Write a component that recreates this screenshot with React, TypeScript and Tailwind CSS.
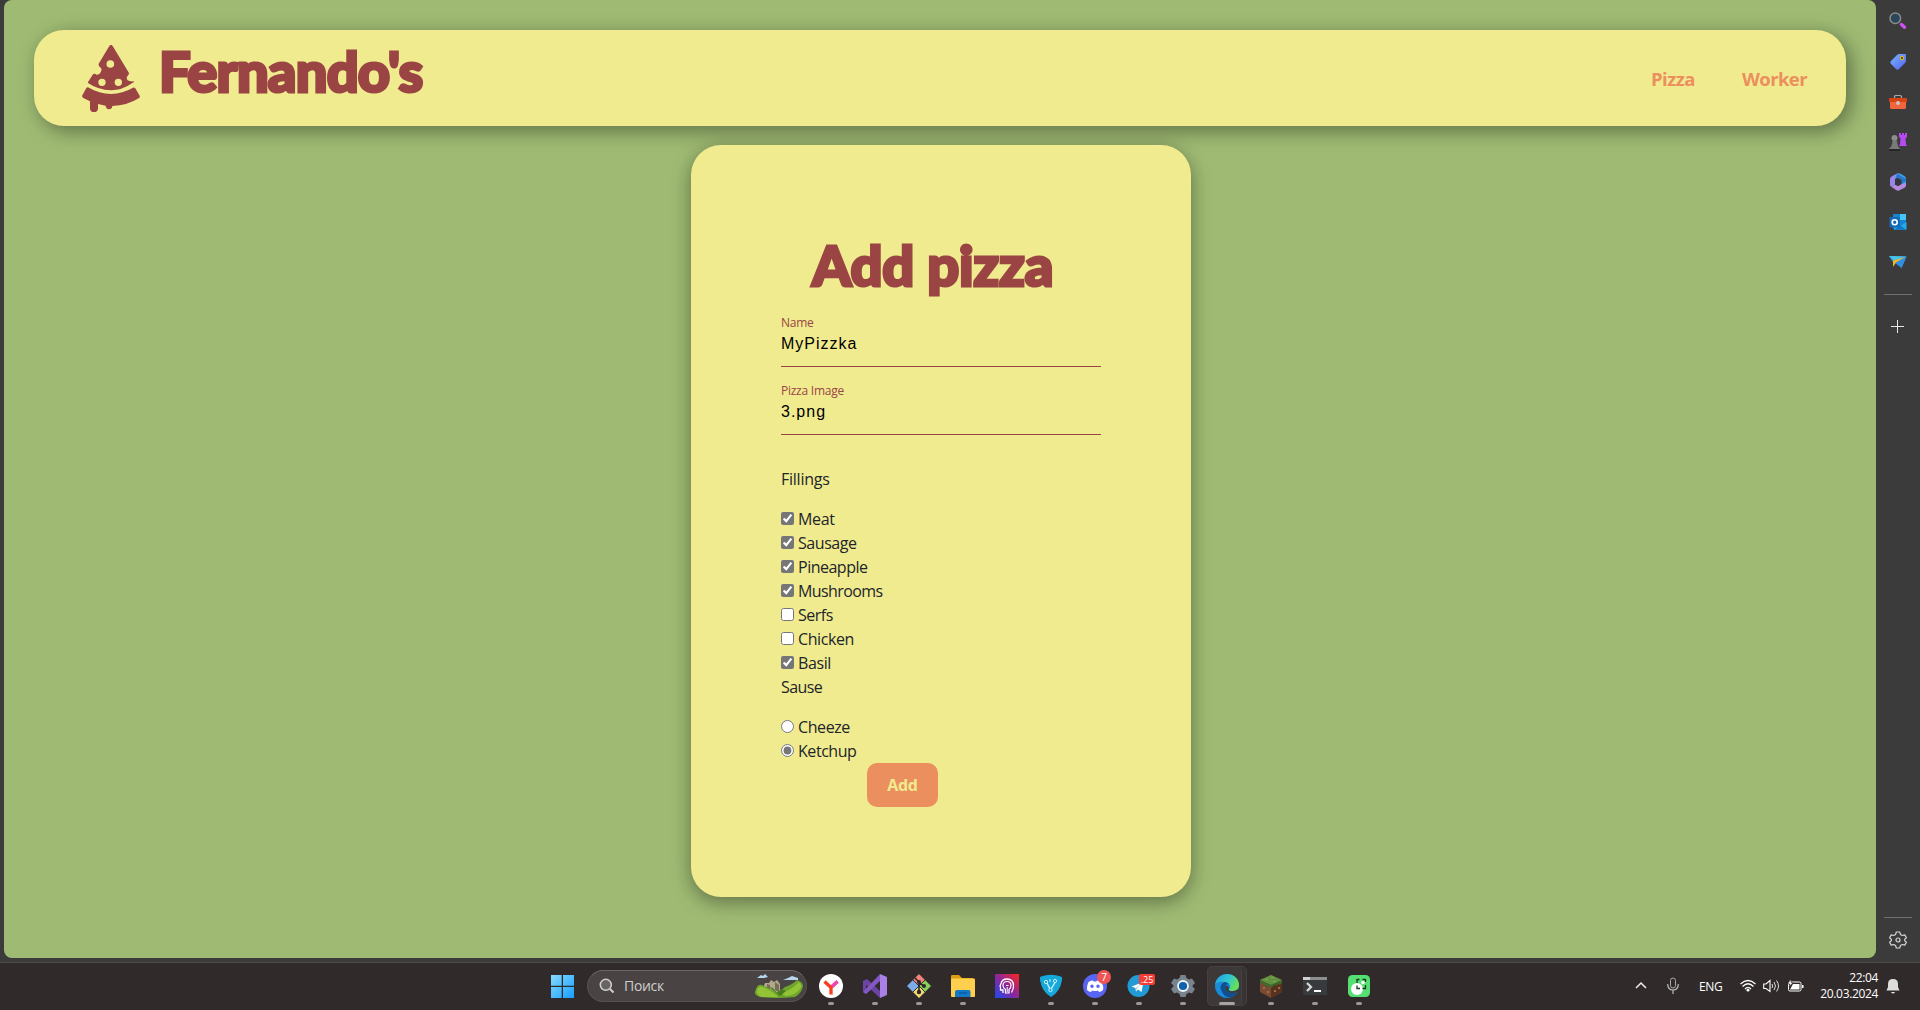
import React from "react";

const title = "font-['Lato'] font-black text-[#9b4444] whitespace-nowrap leading-none";
const ui = "font-['Open_Sans',sans-serif]";

function PizzaLogo() {
  return (
    <svg className="h-[67px] w-[58px]" viewBox="246 135 174 201" fill="#9b4444">
      <path
        fillRule="evenodd"
        d="M328 138Q333 131 338 138L387 219Q387 225 382 229Q378 234 383 241Q388 245 402 244Q403 247 396 250Q366 271 333 271Q295 270 264 249Q263 246 266 243L278 224Q282 219 290 224Q299 225 302 217Q307 207 302 203Q294 198 296 191ZM331 180.500A11.500 11.500 0 1 0 331 203.500A11.500 11.500 0 1 0 331 180.500ZM306 236A11 11 0 1 0 306 258A11 11 0 1 0 306 236ZM355 236A11 11 0 1 0 355 258A11 11 0 1 0 355 236Z"
      />
      <path d="M259 264Q262 260 267 263Q297 281 333 282Q368 281 399 263Q403 261 406 265L419 287Q421 292 416 295Q381 317 337 318Q336 328 327 328Q318 327 317 317L294 312V326Q293 336 282 336Q271 336 270 326V304L250 294Q245 291 247 286Z" />
    </svg>
  );
}

function Field({ label, value }: { label: string; value: string }) {
  return (
    <div className="mb-[15px] h-[53px] w-80 border-b border-[#9b4444] pt-px">
      <div className={`${ui} h-4 text-[12px] leading-4 tracking-[-0.25px] text-[#9b4444]`}>{label}</div>
      <div className="font-['Liberation_Sans',sans-serif] pt-[3px] text-[16px] leading-5 tracking-[1px] text-black">{value}</div>
    </div>
  );
}

function Option({ type, label, on, track }: { type: "checkbox" | "radio"; label: string; on: boolean; track: string }) {
  return (
    <label className="flex h-6 items-start">
      <input type={type} checked={on} readOnly className="mt-[5px] mr-1 size-[13px] accent-[#767676]" />
      <span className={`leading-6 ${track}`}>{label}</span>
    </label>
  );
}

const S = ({ children, box = "0 0 24 24", cls = "size-6" }: { children: React.ReactNode; box?: string; cls?: string }) => (
  <svg viewBox={box} className={`${cls} shrink-0`} fill="none">
    {children}
  </svg>
);

function Sidebar() {
  const cell = "flex h-10 items-center justify-center";
  return (
    <aside className="flex w-11 flex-col bg-[#3b3b3b] pt-[1px]">
      <div className={cell}>
        <S box="0 0 18 18" cls="size-[18px]">
          <path d="M12.500 12.500L15.500 15.200" stroke="#d050f5" strokeWidth="3.400" strokeLinecap="round" />
          <circle cx="6.300" cy="6.300" r="5.300" fill="#29465a" stroke="#8b8b8b" strokeWidth="1.500" />
        </S>
      </div>
      <div className={`${cell} h-[41px]`}>
        <S box="0 0 18 18" cls="size-[18px]">
          <defs><linearGradient id="tag" x1="0" y1="0" x2="1" y2="1"><stop stopColor="#78b8ff" /><stop offset="1" stopColor="#5560f2" /></linearGradient></defs>
          <path d="M10 1H16Q17 1 17 2V8Q17 9 16 10L10 16Q8.500 17.500 7 16L2 11Q.5 9.500 2 8L8 2Q9 1 10 1Z" fill="url(#tag)" />
          <circle cx="13" cy="5" r="1.700" fill="#354276" stroke="#d9b51b" strokeWidth="1.200" />
        </S>
      </div>
      <div className={cell}>
        <S box="0 0 18 18" cls="size-[18px]">
          <path d="M5.500 5V3.500Q5.500 2.500 7 2.500H11Q12.500 2.500 12.500 3.500V5" stroke="#a9a9a9" strokeWidth="1.200" />
          <rect x="1" y="6" width="16" height="10" rx="1.500" fill="#f1653e" />
          <path d="M1 5H17Q18 5 18 6V9H0V6Q0 5 1 5Z" fill="#d84316" />
          <circle cx="9" cy="10" r="1.900" fill="#c9c9c9" />
        </S>
      </div>
      <div className={cell}>
        <S box="0 0 18 18" cls="size-[18px]">
          <path d="M10 0H12V2H13V0H15V2H16V0H18V4L16.500 5.500L17 11L18 13H10L11 11L11.500 5.500L10 4Z" fill="#b54af2" />
          <circle cx="5.500" cy="5" r="3" fill="#8c8c8c" />
          <path d="M3 8H8.500L8 9.500L9.500 14L11 15.500V17.500H0V15.500L2 14L3.500 9.500Z" fill="#7a7a7a" />
          <path d="M0 16H11V18H0Z" fill="#262626" />
        </S>
      </div>
      <div className={cell}>
        <S box="0 0 18 18" cls="size-[18px]">
          <path d="M8 .5L2.500 3.500Q1 4.500 1 6V12Q1 13 2 13.500L6 11.500V6L9 4Z" fill="#9a86e9" />
          <path d="M8 .5Q10-.3 12 1L16 3.500Q17 4.500 17 6V12L12.500 14V7.500L6 4.500Z" fill="#3ba5ea" />
          <path d="M17 10V12.500Q17 14 15 15L10 17.500Q8.500 18 7 17L2 13.500L6 11.500L9 13L12.500 11Z" fill="#b58add" />
          <path d="M12.500 7V11L17 8V6L8 .5L7 5Z" fill="#2977ca" />
          <path d="M9 5L12.500 7V11L9 13L6 11.500V6Z" fill="#35373c" />
        </S>
      </div>
      <div className={cell}>
        <S box="0 0 18 18" cls="size-[18px]">
          <rect x="4" y="1" width="13" height="15" rx="1" fill="#1685d1" />
          <path d="M11 1H17V7H11Z" fill="#43c7f4" />
          <path d="M5 10L11 13L17.500 9V16Q17.500 17 16.500 17H5Z" fill="#27a9e7" />
          <path d="M11 12L17 17H5Z" fill="#117ac4" />
          <rect x=".5" y="4" width="10.500" height="10.500" rx="1" fill="#1469b9" />
          <circle cx="5.700" cy="9.200" r="2.500" stroke="white" strokeWidth="1.600" />
        </S>
      </div>
      <div className={`${cell} h-[39px]`}>
        <S box="0 0 18 18" cls="size-[18px]">
          <path d="M0 3L17.500 3.500L12.500 15L7.500 11L3 8Z" fill="#2b91df" />
          <path d="M0 3L17.500 3.500L5 7.500Z" fill="#47c5e8" />
          <path d="M4 7.500L17 4L7 9.500L4 14Z" fill="#f6b525" />
          <path d="M7 9.500L17.500 3.500L12.500 15Z" fill="#2f8fe5" />
        </S>
      </div>
      <div className="mx-2 mt-[13px] h-px bg-[#707070]" />
      <div className="mt-[25px] flex justify-center pr-px">
        <S box="0 0 13 13" cls="size-[13px]"><path d="M6.500 0V13M0 6.500H13" stroke="#e6e6e6" /></S>
      </div>
      <div className="flex-1" />
      <div className="mx-2 h-px bg-[#707070]" />
      <div className="mt-[13px] mb-[13px] flex justify-center">
        <S box="0 0 18 18" cls="size-[18px]">
          <path d="M7.300 1H10.700L11.400 3.400L13.300 4.500L15.800 3.900L17.400 6.700L15.600 8.400V9.600L17.400 11.300L15.800 14.100L13.300 13.500L11.400 14.600L10.700 17H7.300L6.600 14.600L4.700 13.500L2.200 14.100L.6 11.300L2.400 9.600V8.400L.6 6.700L2.200 3.900L4.700 4.500L6.600 3.400Z" stroke="#d5d5d5" strokeWidth="1.200" strokeLinejoin="round" />
          <circle cx="9" cy="9" r="2" stroke="#d5d5d5" strokeWidth="1.200" />
        </S>
      </div>
    </aside>
  );
}

function Tile({ children, run = true, active = false }: { children: React.ReactNode; run?: boolean; active?: boolean }) {
  return (
    <div className="relative h-10 w-11 shrink-0">
      {active && <span className="absolute top-0 left-[2px] h-10 w-10 rounded-[5px] border border-[#454040] bg-[#393434]" />}
      {active && <span className="absolute top-0 left-0.5 h-10 w-[35px] rounded-[5px] border border-[#464141] bg-[#3e3939]" />}
      <div className="absolute top-2 left-2.5 size-6">{children}</div>
      {run && <span className={active ? "absolute top-9 left-3.5 h-[3px] w-4 rounded-full bg-[#a6a3a3]" : "absolute top-9 left-[19px] h-[3px] w-1.5 rounded-full bg-[#9b9898]"} />}
    </div>
  );
}

function AppIcons() {
  return (
    <>
      <Tile><S>
        <circle cx="12" cy="12" r="12" fill="white" />
        <path d="M5.500 7.500L12 13.500L18.500 7.500M12 13V20.500" stroke="#fa3c21" strokeWidth="3.300" />
        <path d="M13 12.500L18.500 7.500" stroke="#f145bb" strokeWidth="3.300" />
      </S></Tile>
      <Tile><S>
        <path d="M0 7L4 5L17 17V24L3 11V15L7 11.500L10 14L3 20L0 18Z" fill="#6b44a5" />
        <path d="M3 20L0 18L17 0V7Z" fill="#8358c4" />
        <path d="M17 0L24 3V21L17 24Z" fill="#a981e6" />
      </S></Tile>
      <Tile><S>
        <path d="M12 0L18 6L12 12L6 6Z" fill="#f4817b" />
        <path d="M6 6L12 12L6 18L0 12Z" fill="#7daceb" />
        <path d="M18 6L24 12L18 18L12 12Z" fill="#8bcf58" />
        <path d="M12 12L18 18L12 24L6 18Z" fill="#f5d777" />
        <path d="M6 6L18 18M18 6L6 18" stroke="#352d2d" />
        <path d="M8 4L12 8V18M12 9L17 12" stroke="#2b2929" strokeWidth="1.600" />
        <circle cx="12" cy="8" r="2" fill="#2b2929" /><circle cx="12" cy="18" r="2.200" fill="#2b2929" /><circle cx="17" cy="12" r="2" fill="#2b2929" />
      </S></Tile>
      <Tile><S>
        <path d="M0 2Q0 1 1 1H8L11 4H22V10H0Z" fill="#dc9d10" />
        <rect y="4.500" width="24" height="18.500" rx="1" fill="#ffd04d" />
        <path d="M4 23V18Q4 16 6 16H18Q19.500 16 19.500 18V23Z" fill="#1479c4" /><path d="M8 19H16" stroke="#075ca6" strokeWidth="1.500" />
      </S></Tile>
      <Tile run={false}><S>
        <defs><linearGradient id="rb" x1="0" y1="1" x2="1" y2="0"><stop stopColor="#194bf2" /><stop offset=".5" stopColor="#8e269a" /><stop offset="1" stopColor="#ff231e" /></linearGradient></defs>
        <path d="M0 0H24V24H0Z" fill="url(#rb)" />
        <path d="M8 19V16H5.500V13L5 12L6 9.500Q7 5 12 5Q18.500 5 18.500 12Q18.500 15 16.500 18.500" stroke="white" strokeWidth="1.300" />
        <path d="M10.500 19V15.500Q8 14 8 11.500Q8 7.500 12 7.500Q16 7.500 16 11.500Q16 14 14 15.500V19Z" stroke="white" strokeWidth="1.200" />
        <path d="M12.200 18V13M11 11.500H13.500" stroke="white" />
      </S></Tile>
      <Tile><S>
        <path d="M2 2.500Q12-1 22 2.500Q23.500 3 23 6Q21 18 12 23Q3 18 1 6Q.5 3 2 2.500Z" fill="#16a8da" />
        <path d="M8 9L11.500 16L16 8.500" stroke="#c8f3ff" strokeWidth="1.400" />
        <circle cx="7" cy="8" r="1.700" fill="#16a8da" stroke="#c8f3ff" /><circle cx="11.500" cy="16" r="1.700" fill="#16a8da" stroke="#c8f3ff" /><circle cx="16" cy="7" r="1.600" fill="#16a8da" stroke="#c8f3ff" /><path d="M11 5V8" stroke="#c8f3ff" />
      </S></Tile>
      <Tile>
        <S>
          <circle cx="12" cy="12" r="12" fill="#5865f2" />
          <path fillRule="evenodd" d="M5.500 8Q8 6 10 6.500L10.500 7.500H13.500L14 6.500Q16 6 18.500 8Q21 13 20 16Q18 18 16 18L15 16.500Q12 17.500 9 16.500L8 18Q6 18 4 16Q3.500 12 5.500 8ZM9 10.500A1.700 1.700 0 1 0 9 14A1.700 1.700 0 1 0 9 10.500ZM15 10.500A1.700 1.700 0 1 0 15 14A1.700 1.700 0 1 0 15 10.500Z" fill="white" />
        </S>
        <span className={`${ui} absolute -top-1 left-[14px] flex size-3.5 items-center justify-center rounded-full bg-[#f05555] text-[10px] leading-none text-white`}>7</span>
      </Tile>
      <Tile>
        <S><circle cx="11.500" cy="12" r="11" fill="#229bd5" /><path d="M4.500 12.500L16.500 8L14.500 18L11 15.500L9 17.500L8.500 14Z" fill="white" /><path d="M8.500 14L14 10L10 14.500L9 17.500Z" fill="#a9d5ec" /></S>
        <span className={`${ui} absolute top-0 left-3 flex h-[11px] w-4 items-center justify-center rounded-[2px] bg-[#f53d35] text-[9px] leading-none text-white`}>.25</span>
      </Tile>
      <Tile><S>
        <path d="M9.500 1H14.500L15.500 4L18 5.500L21 4.500L24 9L21.500 11.500V12.500L24 15L21 19.500L18 18.500L15.500 20L14.500 23H9.500L8.500 20L6 18.500L3 19.500L0 15L2.500 12.500V11.500L0 9L3 4.500L6 5.500L8.500 4Z" fill="#78848d" />
        <circle cx="12" cy="12" r="5" fill="#1261ad" stroke="#eef4f8" strokeWidth="1.800" />
      </S></Tile>
      <Tile active><S>
        <defs>
          <linearGradient id="edge" x1="0" y1="0" x2="1" y2=".4"><stop stopColor="#249ee1" /><stop offset=".6" stopColor="#30c6d1" /><stop offset="1" stopColor="#67df57" /></linearGradient>
        </defs>
        <circle cx="12" cy="12" r="12" fill="#1477c9" />
        <path d="M0 11C1 4 6 0 12 0C20 0 24 6 24 11C24 15 21 17 17 17C14 17 13 16 14.500 14.500C16 12 14 8 9 8C5 8 1 9 0 11Z" fill="url(#edge)" />
        <path d="M9 8Q3 12 7 18Q9 23 15 23.500Q20 22 22.500 18Q17 20 13 18Q10 16 10.500 13Q11 9 14 10Q12 8 9 8Z" fill="#124f91" />
        <path d="M0 11Q3 7 9 8Q3 12 7 18Q9 23 15 23.500Q7 25 2.500 19Q0 15 0 11Z" fill="#198bd8" />
        <path d="M14 14.500Q12 16 15 17Q19 18 23.500 15L24 16.500L22.500 18Q17 20 13 18Q10 16 10.500 13Q12 10 14 14.500Z" fill="#3e3939" />
      </S></Tile>
      <Tile><S>
        <path d="M1 6L12 1L23 6V18L12 24L1 18Z" fill="#7a4b33" /><path d="M12 12L23 6V18L12 24Z" fill="#57321f" />
        <path d="M1 6L12 1L23 6L12 11Z" fill="#609241" />
        <path d="M1 6L12 11L23 6V9L20 11V9L17 12V10L12 14L9 12V13L6 11V12L4 9L1 10Z" fill="#3e6b2b" />
        <path d="M4 13H6V15H4ZM8 17H10V19H8ZM15 16H17V18H15ZM19 13H21V15H19Z" fill="#a56a48" />
        <path d="M6 5H9V6H6ZM12 3H15V4H12ZM14 7H17V8H14Z" fill="#79ad53" />
      </S></Tile>
      <Tile><S>
        <path d="M0 3H24V21H0Z" fill="#383b3e" /><path d="M0 3H24V6H0Z" fill="#8c8e90" /><path d="M0 3H7V6H0Z" fill="#cfd0d1" />
        <path d="M4 9L8 13L4 17" stroke="#d7d7d7" strokeWidth="2.300" /><path d="M11 17H18" stroke="white" strokeWidth="2" />
      </S></Tile>
      <Tile><S>
        <rect x="1" y="1" width="22" height="22" rx="4.500" fill="#55e073" />
        <circle cx="10" cy="15" r="6" fill="white" /><circle cx="16" cy="8.500" r="1.800" fill="white" />
        <path d="M10 9V5.500H12.500M15.500 5.500H18.500V8M18.500 11V14.500H15.500M10 11.500V14.500H13" stroke="#173b20" strokeWidth="1.300" />
      </S></Tile>
    </>
  );
}

function Taskbar() {
  return (
    <footer className="flex h-12 w-full border-t border-[#4b4a48] bg-[#302a2a] pt-[3px]">
      <div className="w-[550px] shrink-0" />
      <div className="mt-2 h-6 w-[37px] shrink-0">
        <S>
          <defs><linearGradient id="win" x1="0" y1="0" x2="1" y2="1"><stop stopColor="#88dcff" /><stop offset="1" stopColor="#159dff" /></linearGradient></defs>
          <path d="M1 1H11.700V11.700H1ZM13 1H24V11.700H13ZM1 13H11.700V24H1ZM13 13H24V24H13Z" fill="url(#win)" />
        </S>
      </div>
      <div className="mt-1 mr-0.5 flex h-8 w-[220px] shrink-0 items-center rounded-full border border-[#565151] border-t-[#6b6767] bg-[#494443] pl-[11px]">
        <S box="0 0 16 16" cls="size-4"><circle cx="6.800" cy="6.800" r="5.500" stroke="#d2d0d0" strokeWidth="1.500" fill="#696565" /><path d="M11 11L14.500 14.500" stroke="#d2d0d0" strokeWidth="2" /></S>
        <span className={`${ui} ml-[9px] w-[130px] text-[14px] leading-none tracking-[-0.3px] text-[#cfcdcd]`}>Поиск</span>
        <S box="0 0 50 26" cls="h-[26px] w-[50px]">
          <path d="M3 5L7 2L9 3L11 1L14 4L10 5ZM29 7L34 5L38 3L44 5V7Z" fill="#b6d7ed" />
          <path d="M9 15L11 10H15L17 7L20 9L23 7L26 11V20H9Z" fill="#b2a78a" />
          <path d="M13 17V11L16 12V18M21 17V9L25 12V19" fill="#756d55" />
          <path d="M1 19Q3 10 8 12Q14 15 22 19Q26 19 31 14Q38 12 43 7Q49 9 49 13Q48 20 41 24Q22 26 6 24Q0 22 1 19Z" fill="#6fa52a" />
          <path d="M3 17Q5 12 9 14Q20 19 24 24H8Q2 22 3 17ZM27 20Q38 17 45 9Q49 13 46 16Q42 22 32 23Z" fill="#92c436" />
          <path d="M15 14L19 15L23 20L27 16L32 18L26 23L20 18Z" fill="#477c21" />
        </S>
      </div>
      <AppIcons />
      <div className="flex-1" />
      <div className={`${ui} flex h-10 items-center text-[12px] text-white`}>
        <S box="0 0 12 12" cls="size-3 mr-[20px]"><path d="M1 8L6 3L11 8" stroke="#eee" strokeWidth="1.500" /></S>
        <S box="0 0 12 18" cls="h-[18px] w-3 mr-5"><rect x="3.500" y="1" width="5" height="10" rx="2.500" stroke="#aaa" /><path d="M.7 7Q.7 13 6 13Q11.300 13 11.300 7M6 13V17" stroke="#bbb" strokeWidth="1.200" /></S>
        <span className="mr-[17px] w-6 pt-px text-[12px] tracking-[-0.3px]">ENG</span>
        <S box="0 0 16 14" cls="h-3.5 w-4 mr-[7px]"><path d="M.5 5Q8-2 15.500 5M2.500 7.500Q8 2 13.500 7.500M5 10Q8 6.500 11 10" stroke="white" strokeWidth="1.200" /><circle cx="8" cy="11" r="1.600" fill="white" /></S>
        <S box="0 0 17 14" cls="h-3.5 w-[17px] mr-[7px]"><path d="M.7 5H3L7 1.500V12.500L3 9.500H.7Z" stroke="white" strokeWidth="1.100" /><path d="M9 5Q10.300 7 9 9M11 3Q14 7 11 11M13.500 1.500Q17.500 7 13.500 12.500" stroke="#ddd" /></S>
        <S box="0 0 17 14" cls="h-3.5 w-[17px] mr-[14px]"><rect x="1.500" y="3" width="12.500" height="9" rx="1.500" stroke="white" /><path d="M6 5H12.500V10.500H3Z" fill="white" /><path d="M15 6H16.500V9H15Z" fill="white" /><path d="M3.500 0L1 5H3L2 8L6 3.500H4Z" fill="white" stroke="#302a2a" strokeWidth=".5" /></S>
        <div className="w-[60px] shrink-0 text-right text-[12px] leading-4 tracking-[-0.35px]"><div>22:04</div><div>20.03.2024</div></div>
        <S box="0 0 14 16" cls="h-4 w-3.5 ml-2 mr-[20px]"><path d="M2 6Q2 1 7 1Q12 1 12 6V9L13.500 12.500H.5L2 9ZM5 14H9Q8.500 15.500 7 15.500Q5.500 15.500 5 14Z" fill="#dedcdc" /></S>
      </div>
    </footer>
  );
}

export default function App() {
  return (
    <div className="flex h-[1010px] w-[1920px] flex-col overflow-hidden bg-[#3b3b3b]">
      <div className="flex h-[962px]">
        <main className="ml-1 flex h-[958px] w-[1872px] flex-col rounded-lg bg-[#9fbb73] pt-[30px]">
          <header className="ml-[30px] flex h-24 w-[1812px] rounded-[30px] bg-[#f1eb90] pl-12 shadow-[5px_5px_20px_rgba(0,0,0,0.4)]">
            <div className="mt-[15px] w-[77px] shrink-0"><PizzaLogo /></div>
            <div className={`${title} mt-[13px] text-[56px] tracking-[-0.8px] [-webkit-text-stroke:3px_#9b4444]`}>Fernando's</div>
            <nav className="ml-auto flex pt-[37px] font-['Open_Sans',sans-serif] text-[18.500px] leading-6 font-bold text-[#ec8f5e]">
              <span className="w-[91px] tracking-[-0.5px]">Pizza</span>
              <span className="w-[104px] tracking-[-0.6px]">Worker</span>
            </nav>
          </header>
          <section className="mt-[19px] ml-[687px] h-[752px] w-[500px] rounded-[30px] bg-[#f1eb90] px-[90px] pt-[92px] shadow-[0_5px_20px_rgba(0,0,0,0.4)]">
            <h1 className={`${title} ml-[31px] h-[77px] text-[56px] tracking-[-0.2px] [-webkit-text-stroke:3px_#9b4444]`}>Add pizza</h1>
            <Field label="Name" value="MyPizzka" />
            <Field label="Pizza Image" value="3.png" />
            <div className={`${ui} pt-[17px] text-[16px] leading-6 text-[#212529]`}>
              <p className="mb-4 tracking-[-0.25px]">Fillings</p>
              <Option type="checkbox" label="Meat" on track="tracking-[-0.3px]" />
              <Option type="checkbox" label="Sausage" on track="tracking-[-0.45px]" />
              <Option type="checkbox" label="Pineapple" on track="tracking-[-0.5px]" />
              <Option type="checkbox" label="Mushrooms" on track="tracking-[-0.6px]" />
              <Option type="checkbox" label="Serfs" on={false} track="tracking-[-0.5px]" />
              <Option type="checkbox" label="Chicken" on={false} track="tracking-[-0.4px]" />
              <Option type="checkbox" label="Basil" on track="tracking-[-0.4px]" />
              <p className="mb-4 tracking-[-0.6px]">Sause</p>
              <Option type="radio" label="Cheeze" on={false} track="tracking-[-0.4px]" />
              <Option type="radio" label="Ketchup" on track="tracking-[-0.45px]" />
            </div>
            <button className={`${ui} ml-[86px] block h-11 w-[71px] rounded-[10px] bg-[#ec8f5e] text-[16px] font-bold tracking-[-0.3px] text-[#f1eb90]`}>Add</button>
          </section>
        </main>
        <Sidebar />
      </div>
      <Taskbar />
    </div>
  );
}
